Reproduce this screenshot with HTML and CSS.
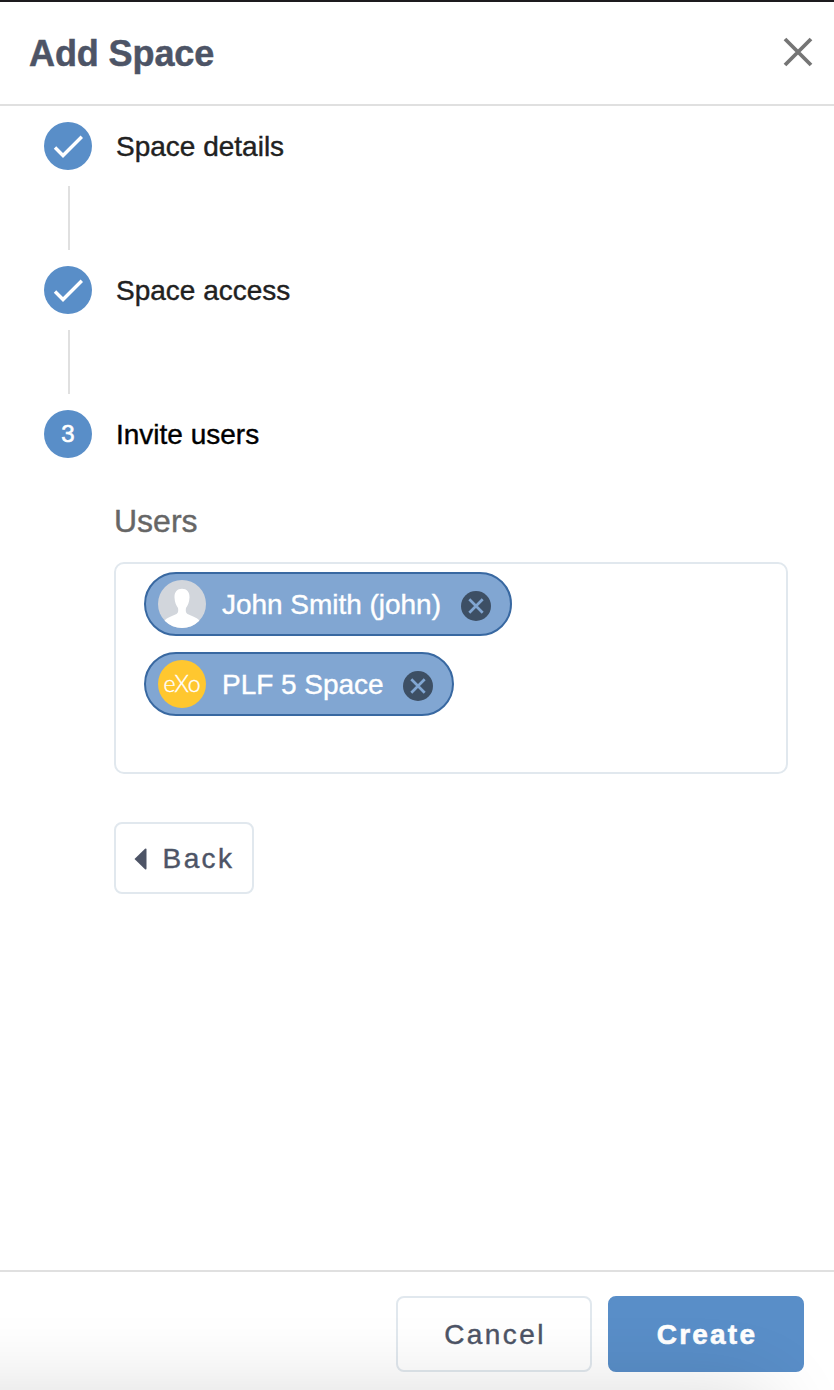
FILE: index.html
```html
<!DOCTYPE html>
<html lang="en">
<head>
<meta charset="utf-8">
<title>Add Space</title>
<link rel="stylesheet" href="styles.css">
</head>
<body>
<div class="drawer">
  <header class="header">
    <h1 class="title">Add Space</h1>
    <button class="close" aria-label="Close">
      <svg width="30" height="30" viewBox="0 0 30 30"><path d="M2 2 28 28M28 2 2 28" stroke="#757575" stroke-width="3.8" fill="none"/></svg>
    </button>
  </header>
  <main class="content">
    <div class="step">
      <span class="badge"><svg width="48" height="48" viewBox="0 0 48 48"><path d="M11 25.500 19 33.500 37.800 14.700" stroke="#fff" stroke-width="3.4" fill="none"/></svg></span>
      <span class="label">Space details</span>
    </div>
    <div class="connector"></div>
    <div class="step">
      <span class="badge"><svg width="48" height="48" viewBox="0 0 48 48"><path d="M11 25.500 19 33.500 37.800 14.700" stroke="#fff" stroke-width="3.4" fill="none"/></svg></span>
      <span class="label">Space access</span>
    </div>
    <div class="connector"></div>
    <div class="step">
      <span class="badge">3</span>
      <span class="label current">Invite users</span>
    </div>
    <section class="invite">
      <h2 class="field-label">Users</h2>
      <div class="field">
        <div class="chip">
          <svg class="avatar" width="48" height="48" viewBox="0 0 48 48">
            <defs><clipPath id="round"><circle cx="24" cy="24" r="24"/></clipPath></defs>
            <g clip-path="url(#round)">
              <rect width="48" height="48" fill="#d2d6dc"/>
              <path d="M24 8.800C19 8.800 16.300 12.200 16.500 17.500C16.700 22.500 18.300 25.500 20 28C20.500 31 20.200 33 18.500 34C14 36 9 37.500 6.500 40.500L6 49H42L41.500 40.500C39 37.500 34 36 29.500 34C27.800 33 27.500 31 28 28C29.700 25.500 31.300 22.500 31.500 17.500C31.700 12.200 29 8.800 24 8.800Z" fill="#fff"/>
            </g>
          </svg>
          <span class="chip-text">John Smith (john)</span>
          <svg class="remove" width="30" height="30" viewBox="0 0 30 30"><circle cx="15" cy="15" r="15" fill="#3d4f64"/><path d="M8.300 8.300 21.700 21.700M21.700 8.300 8.300 21.700" stroke="#81a6d2" stroke-width="2.700"/></svg>
        </div>
        <div class="chip">
          <span class="avatar logo"><span>e</span><span class="logo-x">X</span><span>o</span></span>
          <span class="chip-text">PLF 5 Space</span>
          <svg class="remove" width="30" height="30" viewBox="0 0 30 30"><circle cx="15" cy="15" r="15" fill="#3d4f64"/><path d="M8.300 8.300 21.700 21.700M21.700 8.300 8.300 21.700" stroke="#81a6d2" stroke-width="2.700"/></svg>
        </div>
      </div>
      <button class="button back"><svg width="13" height="22" viewBox="0 0 13 22"><path d="M0.500 11 11 0.800Q12.500 0 12.500 1.500V20.500Q12.500 22 11 21.200Z" fill="#4d5466"/></svg>Back</button>
    </section>
  </main>
  <footer class="footer">
    <button class="button cancel">Cancel</button>
    <button class="button create">Create</button>
  </footer>
  <div class="bottom-shade"></div>
</div>
</body>
</html>
```
FILE: styles.css
```css
* { box-sizing: border-box; }
body {
  margin: 0;
  background: #fff;
  font-family: "Liberation Sans", Arial, sans-serif;
}
.drawer {
  position: relative;
  display: flex;
  flex-direction: column;
  height: 1390px;
  overflow: hidden;
  border-top: 2px solid #1d1b1e;
}
.header {
  display: flex;
  align-items: center;
  justify-content: space-between;
  height: 104px;
  padding: 0 21px 0 29px;
  border-bottom: 2px solid #e0e0e0;
}
.title {
  margin: 0;
  padding-top: 2px;
  color: #4d5466;
  font-size: 36px;
  line-height: 44px;
  letter-spacing: -0.1px;
  -webkit-text-stroke: 0.5px currentColor;
}
.close {
  display: flex;
  padding: 0;
  border: 0;
  background: none;
  margin: 0 0 3px;
}
.content {
  flex: 1;
  padding: 16px 46px 0 44px;
}
.step {
  display: flex;
  align-items: center;
  gap: 24px;
  height: 48px;
}
.badge {
  display: flex;
  align-items: center;
  justify-content: center;
  width: 48px;
  height: 48px;
  border-radius: 50%;
  background: #598ec8;
  color: #fff;
  font-size: 24px;
  -webkit-text-stroke: 0.6px #fff;
}
.label {
  padding-top: 2px;
  color: #212121;
  font-size: 28px;
  line-height: 32px;
  -webkit-text-stroke: 0.4px currentColor;
}
.current { color: #000; }
.connector {
  width: 2px;
  height: 64px;
  margin: 16px 24px;
  background: #e0e0e0;
}
.invite { padding: 43px 0 0 70px; }
.field-label {
  margin: 0 0 21px;
  color: #666;
  font-size: 32px;
  font-weight: 400;
  line-height: 40px;
  -webkit-text-stroke: 0.4px currentColor;
}
.field {
  display: flex;
  flex-direction: column;
  align-items: flex-start;
  gap: 16px;
  height: 212px;
  padding: 8px 28px;
  border: 2px solid #e1e8ee;
  border-radius: 10px;
}
.chip {
  display: flex;
  align-items: center;
  height: 64px;
  padding: 0 19px 0 12px;
  border: 2px solid #3868a1;
  border-radius: 32px;
  background: #81a6d2;
  color: #fff;
  font-size: 28px;
}
.avatar {
  flex: none;
  width: 48px;
  height: 48px;
  margin-right: 16px;
}
.logo {
  display: flex;
  align-items: center;
  justify-content: center;
  padding-bottom: 3px;
  border-radius: 50%;
  background: #ffc72f;
  font-family: Lato, sans-serif;
  font-size: 23px;
  font-weight: 300;
  -webkit-text-stroke: 0.4px #fff;
}
.logo-x { margin: 0 -1px; }
.chip-text {
  padding-top: 2px;
  line-height: 32px;
  letter-spacing: -0.03px;
  -webkit-text-stroke: 0.4px #fff;
}
.remove { margin: 4px 0 0 19.6px; }
.button {
  display: flex;
  align-items: center;
  justify-content: center;
  padding: 2px 0 0;
  border: 2px solid #e1e8ee;
  border-radius: 8px;
  background: #fff;
  color: #4d5466;
  font-family: inherit;
  font-size: 28px;
  letter-spacing: 2.4px;
  -webkit-text-stroke: 0.4px currentColor;
}
.back {
  gap: 16px;
  width: 140px;
  height: 72px;
  margin-top: 48px;
}
.footer {
  display: flex;
  justify-content: flex-end;
  gap: 16px;
  height: 120px;
  padding: 24px 30px 0;
  border-top: 2px solid #e0e0e0;
}
.cancel,
.create {
  width: 196px;
  height: 76px;
}
.cancel { padding-left: 2px; }
.create {
  padding-left: 2px;
  border-color: #598ec8;
  background: #598ec8;
  color: #fff;
  font-weight: 700;
  letter-spacing: 2.2px;
  -webkit-text-stroke: 0.6px #fff;
}
/* Soft shadow rising over the footer from below the drawer */
.bottom-shade {
  position: absolute;
  top: 100%;
  left: -200px;
  right: 60px;
  height: 200px;
  border-radius: 30px;
  box-shadow: 0 0 80px rgba(0, 0, 0, 0.14);
  pointer-events: none;
}
```
